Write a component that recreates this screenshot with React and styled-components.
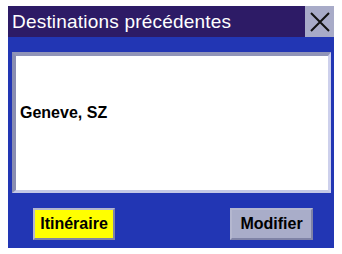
import styled, { createGlobalStyle } from "styled-components"

const Global = createGlobalStyle`
    *, *::before, *::after {
        box-sizing: border-box;
    }
    body {
        margin: 0;
        background: #ffffff;
        font-family: "Liberation Sans", Arial, sans-serif;
    }
`
const Screen = styled.div`
    margin: 6px 0 0 8px;
    width: 326px;
    height: 242px;
    display: flex;
    flex-direction: column;
    background: #2236b4;
`
const TitleBar = styled.div`
    height: 31px;
    display: flex;
    align-items: center;
    background: #2d1b66;
`
const Title = styled.h1`
    flex: 1;
    margin: 0;
    padding-left: 4px;
    font-size: 19px;
    font-weight: normal;
    color: #ffffff;
    letter-spacing: 0.2px;
`
const Close = styled.button`
    width: 29px;
    height: 31px;
    padding: 0;
    border: none;
    background: #a8abc8;
    display: flex;
    align-items: center;
    justify-content: center;
`
const Body = styled.div`
    flex: 1;
    display: flex;
    flex-direction: column;
    padding: 15px 3px 0 4px;
`
const Panel = styled.div`
    height: 141px;
    border-style: solid;
    border-width: 4px 3px 3px 4px;
    border-color: #9094b8 #cdd0ec #c4c8e6 #8a8eb2;
    background: #ffffff;
    display: flex;
    flex-direction: column;
    padding: 48px 0 0 4px;
`
const Entry = styled.div`
    font-size: 16px;
    font-weight: bold;
    color: #000000;
    line-height: 18px;
`
const Actions = styled.div`
    display: flex;
    justify-content: space-between;
    padding: 15px 18px 0 21px;
`
const Button = styled.button`
    height: 32px;
    width: ${props => props.w}px;
    padding: 0;
    border: 2px solid #8c90b2;
    border-color: #b4b7cf #7f83a6 #7f83a6 #b4b7cf;
    background: ${props => props.bg};
    font-family: "Liberation Sans", Arial, sans-serif;
    font-size: 16px;
    font-weight: bold;
    color: #000000;
`

const App = () => {
  return (
    <>
        <Global/>
        <Screen>
            <TitleBar>
                <Title>Destinations précédentes</Title>
                <Close>
                    <svg width="22" height="22" viewBox="0 0 22 22">
                        <path d="M2 2 L20 20 M20 2 L2 20" stroke="#111" strokeWidth="2" fill="none"/>
                    </svg>
                </Close>
            </TitleBar>
            <Body>
                <Panel>
                    <Entry>Geneve, SZ</Entry>
                </Panel>
                <Actions>
                    <Button w={82} bg="#ffff00">Itinéraire</Button>
                    <Button w={83} bg="#a9adc9">Modifier</Button>
                </Actions>
            </Body>
        </Screen>
    </>
  )
}

export default App
